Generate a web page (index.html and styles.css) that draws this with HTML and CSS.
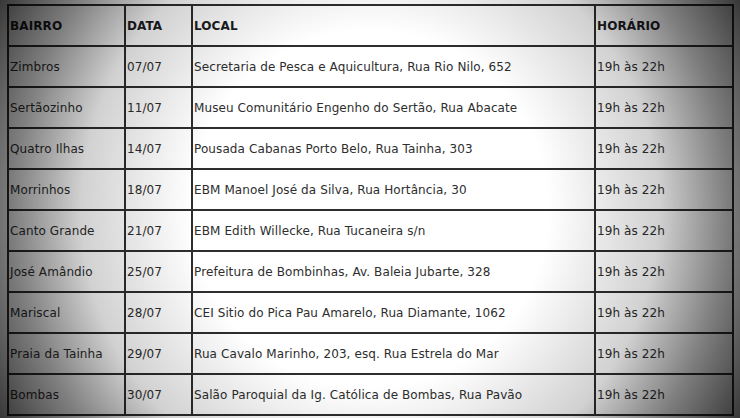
FILE: index.html
```html
<!DOCTYPE html>
<html lang="pt">
<head>
<meta charset="utf-8">
<link rel="stylesheet" href="styles.css">
</head>
<body>
<table class="agenda">
  <thead>
    <tr>
      <th class="c-bairro">BAIRRO</th>
      <th class="c-data">DATA</th>
      <th class="c-local">LOCAL</th>
      <th class="c-hora">HORÁRIO</th>
    </tr>
  </thead>
  <tbody>
    <tr><td>Zimbros</td><td>07/07</td><td>Secretaria de Pesca e Aquicultura, Rua Rio Nilo, 652</td><td>19h às 22h</td></tr>
    <tr><td>Sertãozinho</td><td>11/07</td><td>Museu Comunitário Engenho do Sertão, Rua Abacate</td><td>19h às 22h</td></tr>
    <tr><td>Quatro Ilhas</td><td>14/07</td><td>Pousada Cabanas Porto Belo, Rua Tainha, 303</td><td>19h às 22h</td></tr>
    <tr><td>Morrinhos</td><td>18/07</td><td>EBM Manoel José da Silva, Rua Hortância, 30</td><td>19h às 22h</td></tr>
    <tr><td>Canto Grande</td><td>21/07</td><td>EBM Edith Willecke, Rua Tucaneira s/n</td><td>19h às 22h</td></tr>
    <tr><td>José Amândio</td><td>25/07</td><td>Prefeitura de Bombinhas, Av. Baleia Jubarte, 328</td><td>19h às 22h</td></tr>
    <tr><td>Mariscal</td><td>28/07</td><td>CEI Sitio do Pica Pau Amarelo, Rua Diamante, 1062</td><td>19h às 22h</td></tr>
    <tr><td>Praia da Tainha</td><td>29/07</td><td>Rua Cavalo Marinho, 203, esq. Rua Estrela do Mar</td><td>19h às 22h</td></tr>
    <tr><td>Bombas</td><td>30/07</td><td>Salão Paroquial da Ig. Católica de Bombas, Rua Pavão</td><td>19h às 22h</td></tr>
  </tbody>
</table>
</body>
</html>
```
FILE: styles.css
```css
html, body {
  margin: 0;
  padding: 0;
  background: #ffffff;
}

body {
  padding: 4px 0 0 7px;
  font-family: "DejaVu Sans", Verdana, sans-serif;
  font-size: 12px;
  letter-spacing: 0.1px;
  color: #2e2e2e;
}

body::after {
  content: "";
  position: fixed;
  inset: 0;
  pointer-events: none;
  background: radial-gradient(circle farthest-corner at 50% 50%,
    rgba(0,0,0,0) 42%,
    rgba(0,0,0,0.18) 68%,
    rgba(0,0,0,0.5) 84%,
    rgba(0,0,0,0.64) 92%,
    rgba(0,0,0,0.78) 100%);
}

.agenda {
  border-collapse: separate;
  border-spacing: 0;
  table-layout: fixed;
  width: 727px;
  border-top: 2px solid #2e2e2e;
  border-left: 2px solid #2e2e2e;
}

.agenda th,
.agenda td {
  box-sizing: border-box;
  height: 41px;
  padding: 0 0 0 1px;
  border-right: 2px solid #2e2e2e;
  border-bottom: 2px solid #2e2e2e;
  text-align: left;
  vertical-align: middle;
  white-space: nowrap;
}

.agenda th {
  font-weight: bold;
  color: #1c1c24;
}

.c-bairro { width: 117px; }
.c-data { width: 67px; }
.c-local { width: 403px; }
.c-hora { width: 138px; }
```
